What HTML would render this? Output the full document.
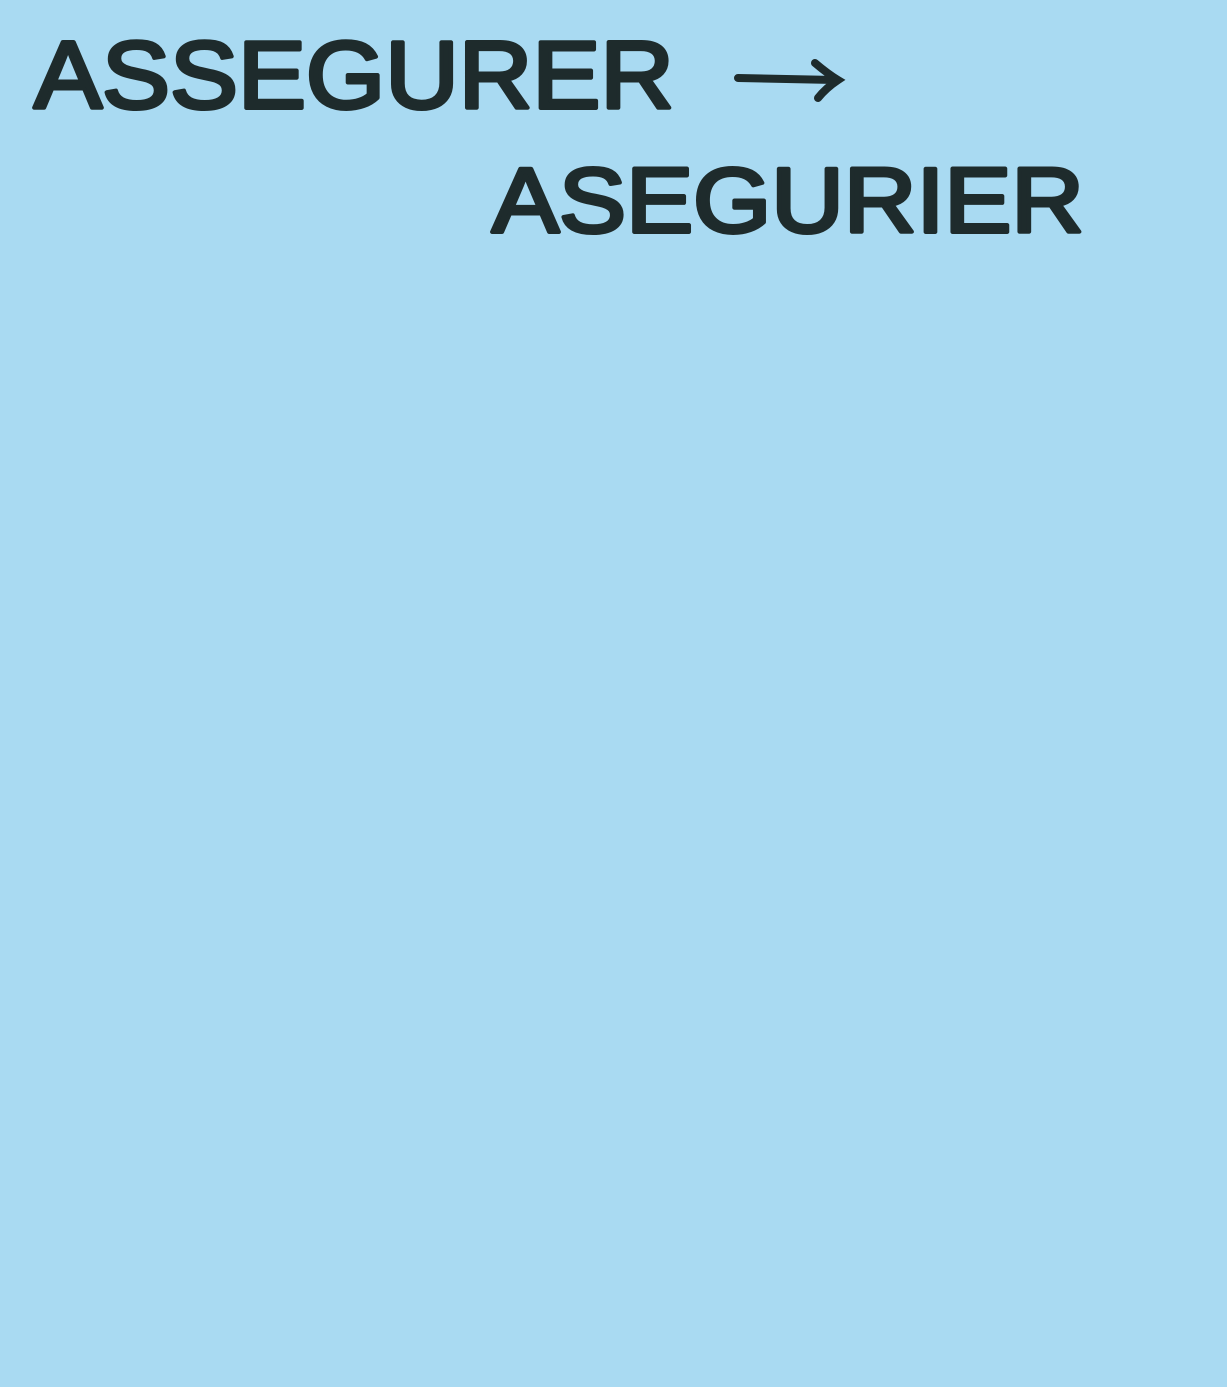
<!DOCTYPE html>
<html><head><meta charset="utf-8"><style>
html,body{margin:0;padding:0;background:#a9daf2;width:1227px;height:1387px;overflow:hidden}
svg{position:absolute;left:0;top:0}
text{font-family:"Liberation Sans",sans-serif;font-weight:normal;fill:#1e2b2c;stroke:#1e2b2c;stroke-width:4;stroke-linejoin:round;stroke-linecap:round}
</style></head><body>
<svg width="1227" height="1387" viewBox="0 0 1227 1387">
<text x="34" y="108" font-size="96" textLength="640" lengthAdjust="spacingAndGlyphs">ASSEGURER</text>
<path d="M738 78 L835 80 M815 63 Q828 74 838 80 Q826 88 818 98" fill="none" stroke="#1e2b2c" stroke-width="8" stroke-linecap="round"/>
<text x="492" y="232" font-size="92" textLength="592" lengthAdjust="spacingAndGlyphs">ASEGURIER</text>
</svg>
</body></html>
